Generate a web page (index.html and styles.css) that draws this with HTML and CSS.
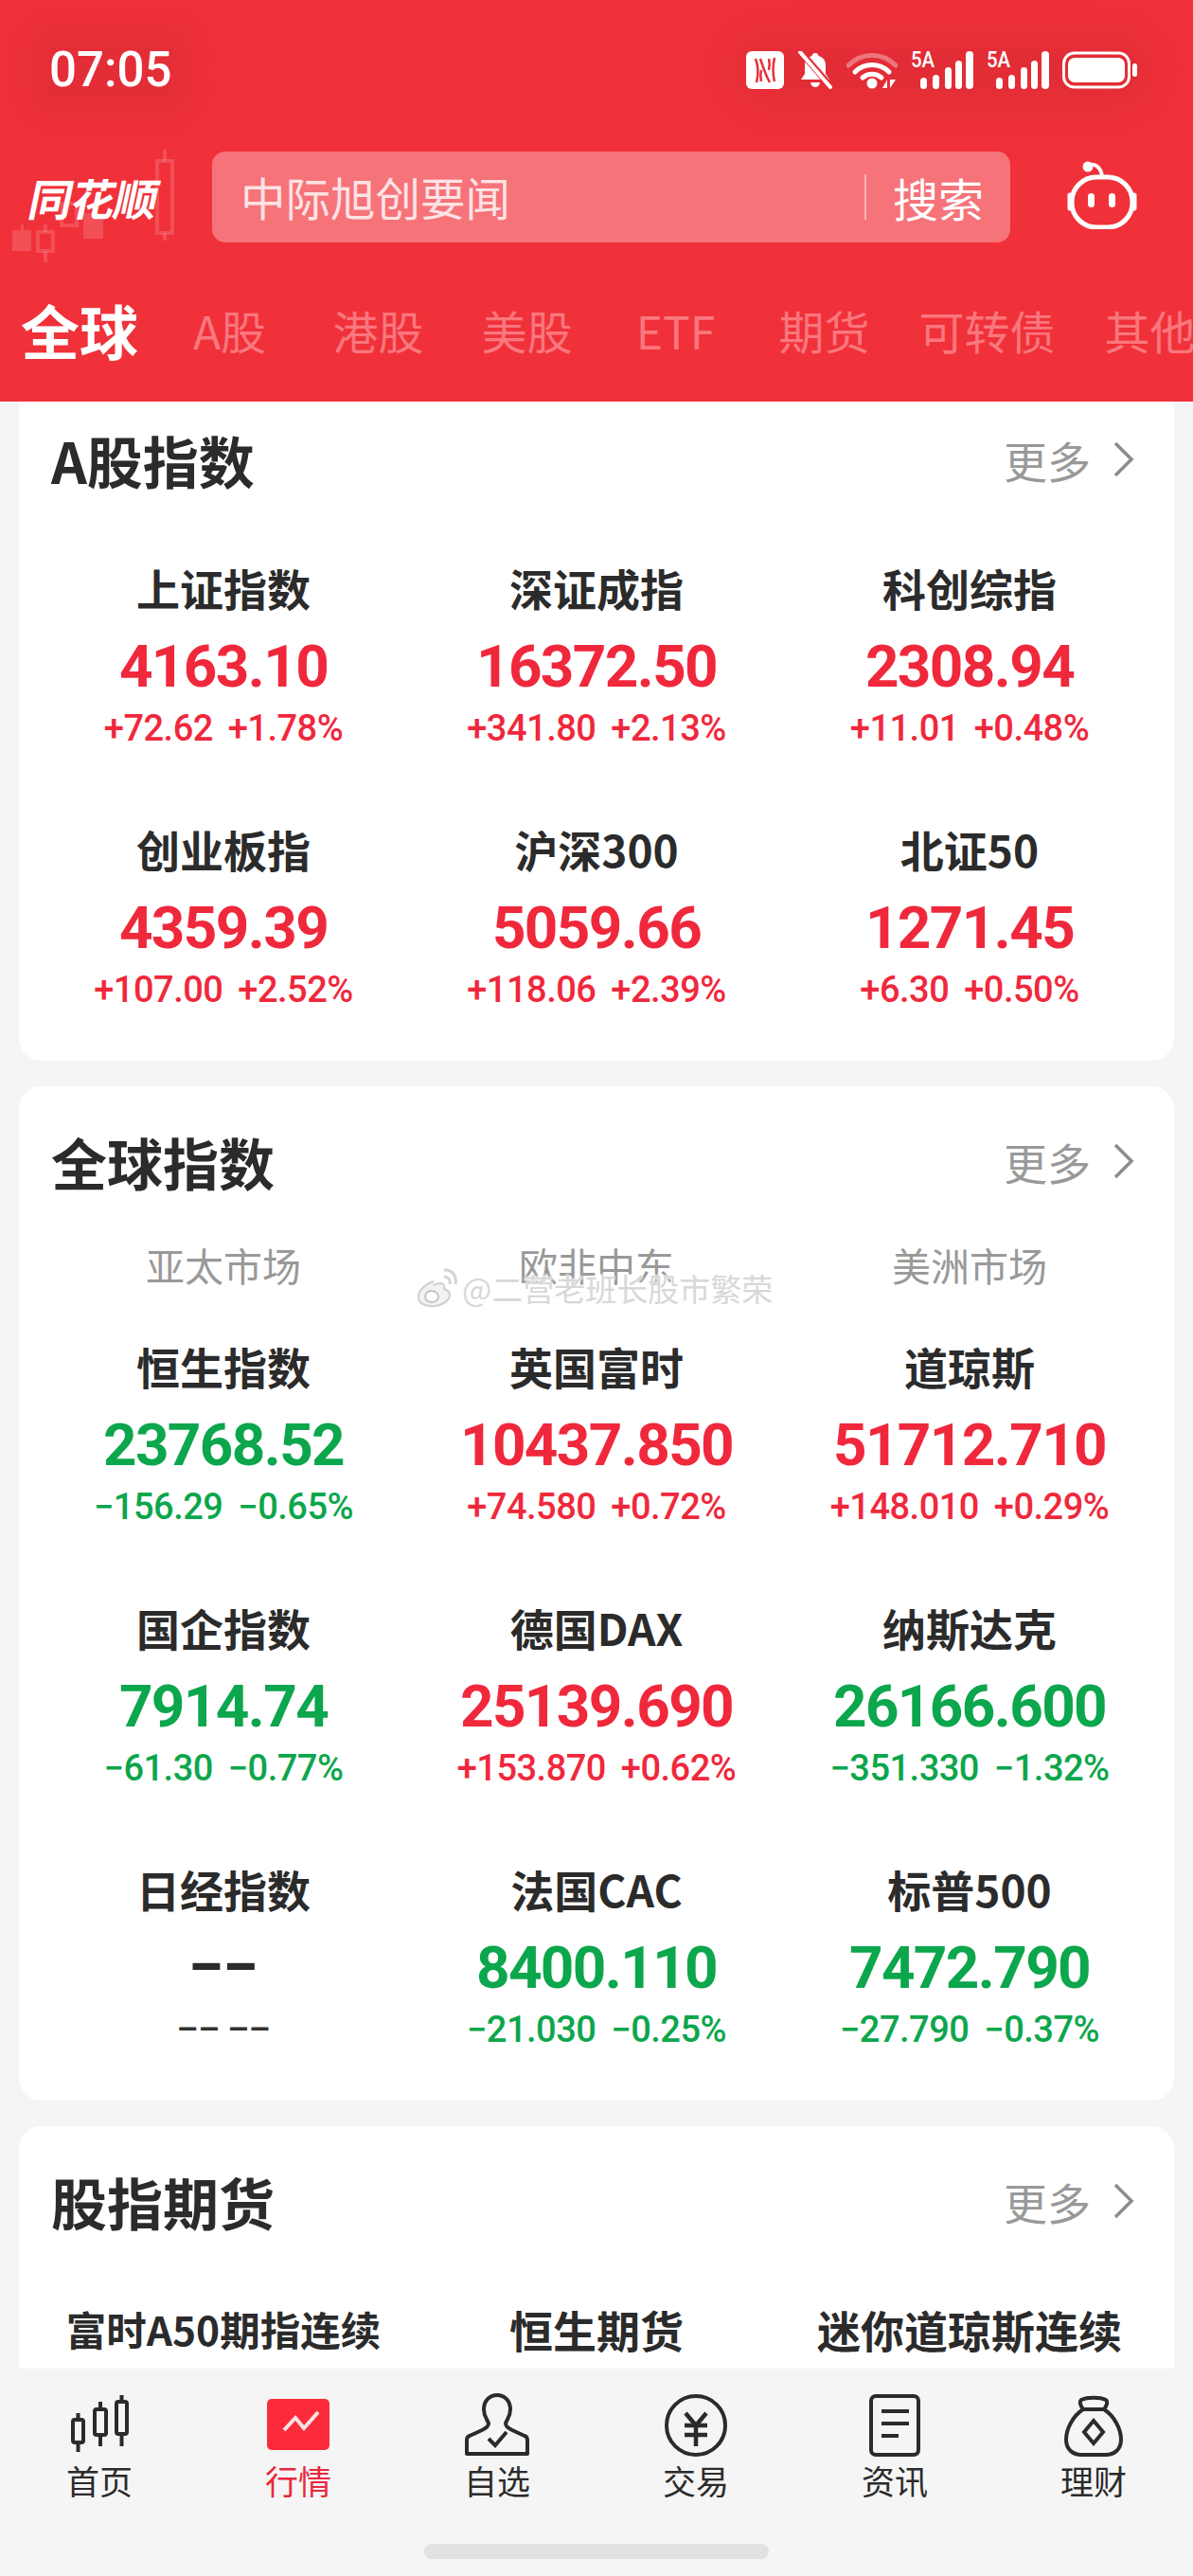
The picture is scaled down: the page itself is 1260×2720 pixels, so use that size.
FILE: index.html
```html
<!DOCTYPE html>
<html lang="zh-CN">
<head>
    <meta charset="UTF-8">
    <meta name="viewport" content="width=device-width, initial-scale=1.0">
    <title>行情</title>
    <link rel="stylesheet" href="styles.css">
</head>
<body>
    <div class="phone">
        <header class="header">
            <svg class="candles" viewBox="0 0 190 130" width="190" height="130">
                <g fill="#fff" fill-opacity="0.15">
                    <rect x="13" y="93" width="20" height="22"/><rect x="22" y="87" width="3" height="6"/>
                    <rect x="88" y="75" width="21" height="27"/>
                    <rect x="121" y="72" width="3" height="10"/>
                </g>
                <g fill="none" stroke="#fff" stroke-opacity="0.15" stroke-width="4">
                    <rect x="40" y="95" width="16" height="20"/><path d="M48 87v8M48 115v12"/>
                    <rect x="65" y="65" width="16" height="23"/>
                    <rect x="166" y="20" width="16" height="76"/><path d="M174 8v12M174 96v8"/>
                </g>
            </svg>
            <div class="status-bar">
                <span class="time">07:05</span>
                <div class="status-icons">
                    <svg class="ic-nfc" viewBox="0 0 40 40" width="40" height="40">
                        <rect width="40" height="40" rx="6" fill="#fff"/>
                        <path d="M10 8c3 8 3 17 1 25M15 8c3 9 5 16 10 25M30 7c-2 9-2 17 0 25M16 32c-1-5-1-8 0-12M24 8c1 4 1 8 0 12" fill="none" stroke="#e8303a" stroke-width="2.500"/>
                    </svg>
                    <svg class="ic-bell" viewBox="0 0 38 40" width="38" height="40">
                        <path d="M19 2c2 0 3 1 3.500 3c5 1.500 7.500 5 7.500 10v9l4 6H4l4-6v-9c0-5 3-8.500 7.500-10C16 3 17 2 19 2zM14 33h10c-.5 3-2.500 5-5 5s-4.500-2-5-5z" fill="#fff"/>
                        <path d="M3 0l33 38" stroke="#e8303a" stroke-width="7"/>
                        <path d="M3 1l32 37" stroke="#fff" stroke-width="4" stroke-linecap="round"/>
                    </svg>
                    <svg class="ic-wifi" viewBox="0 0 54 40" width="54" height="40">
                        <path d="M2 15C16 1 38 1 52 15" fill="none" stroke="#fff" stroke-opacity="0.35" stroke-width="5" stroke-linecap="round"/>
                        <path d="M9 22c10-10 26-10 36 0M17 28c6-5 14-5 20 0" fill="none" stroke="#fff" stroke-width="5" stroke-linecap="round"/>
                        <circle cx="27" cy="34" r="5.500" fill="#fff"/>
                        <path d="M38 39l5-9v9zM46 30v9l6-9z" fill="#fff"/>
                    </svg>
                    <div class="signal">
                        <span class="net">5A</span>
                        <svg viewBox="0 0 66 40" width="66" height="40">
                            <g fill="#fff">
                                <rect x="10" y="28" width="7" height="12" rx="3.500"/><rect x="23" y="25" width="7" height="15" rx="3.500"/>
                                <rect x="36" y="17" width="7" height="23" rx="3.500"/><rect x="58" y="0" width="8" height="40" rx="4"/>
                                <rect x="47" y="10" width="7" height="30" rx="3.500"/>
                            </g>
                        </svg>
                    </div>
                    <div class="signal">
                        <span class="net">5A</span>
                        <svg viewBox="0 0 66 40" width="66" height="40">
                            <g fill="#fff">
                                <rect x="10" y="28" width="7" height="12" rx="3.500"/><rect x="23" y="25" width="7" height="15" rx="3.500"/>
                                <rect x="36" y="17" width="7" height="23" rx="3.500"/><rect x="58" y="0" width="8" height="40" rx="4"/>
                                <rect x="47" y="10" width="7" height="30" rx="3.500"/>
                            </g>
                        </svg>
                    </div>
                    <svg class="ic-battery" viewBox="0 0 80 40" width="80" height="40">
                        <rect x="1.500" y="2" width="69" height="36" rx="11" fill="none" stroke="#fff" stroke-width="3"/>
                        <rect x="6" y="7" width="60" height="26" rx="7" fill="#fff"/>
                        <rect x="74" y="13" width="5" height="14" rx="2.500" fill="#fff"/>
                    </svg>
                </div>
            </div>
            <div class="search-row">
                <span class="logo">同花顺</span>
                <div class="search">
                    <span class="search-text">中际旭创要闻</span>
                    <span class="search-btn">搜索</span>
                </div>
                <svg class="robot" viewBox="0 0 80 72" width="80" height="72">
                    <path d="M25 5c6-3 14 0 15 12" fill="none" stroke="#fff" stroke-width="4"/>
                    <circle cx="25" cy="6" r="5.500" fill="#fff"/>
                    <rect x="8" y="17" width="64" height="53" rx="26" fill="none" stroke="#fff" stroke-width="5"/>
                    <path d="M6 36v14M74 36v14" stroke="#fff" stroke-width="5" stroke-linecap="round"/>
                    <rect x="25" y="34" width="7" height="15" rx="3.500" fill="#fff"/>
                    <rect x="47" y="34" width="7" height="15" rx="3.500" fill="#fff"/>
                </svg>
            </div>
            <nav class="tabs">
                <span class="tab active">全球</span>
                <span class="tab">A股</span>
                <span class="tab">港股</span>
                <span class="tab">美股</span>
                <span class="tab">ETF</span>
                <span class="tab">期货</span>
                <span class="tab wide">可转债</span>
                <span class="tab">其他</span>
            </nav>
        </header>

        <main class="content">
            <section class="card first">
                <div class="card-head">
                    <h2>A股指数</h2>
                    <a class="more">更多<svg viewBox="0 0 24 40" width="24" height="40"><path d="M4 3l17 17L4 37" fill="none" stroke="#8c8c8c" stroke-width="3.500"/></svg></a>
                </div>
                <div class="grid">
                    <div class="cell up"><div class="name">上证指数</div><div class="value">4163.10</div><div class="change">+72.62&nbsp; +1.78%</div></div>
                    <div class="cell up"><div class="name">深证成指</div><div class="value">16372.50</div><div class="change">+341.80&nbsp; +2.13%</div></div>
                    <div class="cell up"><div class="name">科创综指</div><div class="value">2308.94</div><div class="change">+11.01&nbsp; +0.48%</div></div>
                    <div class="cell up"><div class="name">创业板指</div><div class="value">4359.39</div><div class="change">+107.00&nbsp; +2.52%</div></div>
                    <div class="cell up"><div class="name">沪深300</div><div class="value">5059.66</div><div class="change">+118.06&nbsp; +2.39%</div></div>
                    <div class="cell up"><div class="name">北证50</div><div class="value">1271.45</div><div class="change">+6.30&nbsp; +0.50%</div></div>
                </div>
            </section>

            <section class="card">
                <div class="card-head">
                    <h2>全球指数</h2>
                    <a class="more">更多<svg viewBox="0 0 24 40" width="24" height="40"><path d="M4 3l17 17L4 37" fill="none" stroke="#8c8c8c" stroke-width="3.500"/></svg></a>
                </div>
                <div class="markets">
                    <span>亚太市场</span>
                    <span>欧非中东</span>
                    <span>美洲市场</span>
                </div>
                <div class="grid">
                    <div class="cell down"><div class="name">恒生指数</div><div class="value">23768.52</div><div class="change">−156.29&nbsp; −0.65%</div></div>
                    <div class="cell up"><div class="name">英国富时</div><div class="value">10437.850</div><div class="change">+74.580&nbsp; +0.72%</div></div>
                    <div class="cell up"><div class="name">道琼斯</div><div class="value">51712.710</div><div class="change">+148.010&nbsp; +0.29%</div></div>
                    <div class="cell down"><div class="name">国企指数</div><div class="value">7914.74</div><div class="change">−61.30&nbsp; −0.77%</div></div>
                    <div class="cell up"><div class="name">德国DAX</div><div class="value">25139.690</div><div class="change">+153.870&nbsp; +0.62%</div></div>
                    <div class="cell down"><div class="name">纳斯达克</div><div class="value">26166.600</div><div class="change">−351.330&nbsp; −1.32%</div></div>
                    <div class="cell empty"><div class="name">日经指数</div><div class="value">––</div><div class="change">–– ––</div></div>
                    <div class="cell down"><div class="name">法国CAC</div><div class="value">8400.110</div><div class="change">−21.030&nbsp; −0.25%</div></div>
                    <div class="cell down"><div class="name">标普500</div><div class="value">7472.790</div><div class="change">−27.790&nbsp; −0.37%</div></div>
                </div>
                <div class="watermark">
                    <svg viewBox="0 0 44 44" width="44" height="44">
                        <path d="M18 15C8 18 1 26 2 33c1 6 9 9 17 8c9-1 16-6 16-12c0-4-4-5-6-6c1-3 0-6-4-6c-2 0-5 1-7 2" fill="#f2f2f2" stroke="#cfcfcf" stroke-width="2"/>
                        <ellipse cx="16" cy="31" rx="7" ry="6" fill="#fff" stroke="#c4c4c4" stroke-width="2"/>
                        <path d="M29 10c4 0 7 3 6 8M29 3c8-1 14 6 12 15" fill="none" stroke="#d4d4d4" stroke-width="3"/>
                    </svg>
                    <span>@二营老班长股市繁荣</span>
                </div>
            </section>

            <section class="card">
                <div class="card-head">
                    <h2>股指期货</h2>
                    <a class="more">更多<svg viewBox="0 0 24 40" width="24" height="40"><path d="M4 3l17 17L4 37" fill="none" stroke="#8c8c8c" stroke-width="3.500"/></svg></a>
                </div>
                <div class="grid">
                    <div class="cell"><div class="name small">富时A50期指连续</div></div>
                    <div class="cell"><div class="name">恒生期货</div></div>
                    <div class="cell"><div class="name">迷你道琼斯连续</div></div>
                </div>
            </section>
        </main>

        <footer class="tabbar">
            <div class="nav-items">
                <div class="nav-item">
                    <svg viewBox="0 0 80 70" width="80" height="70">
                        <g fill="none" stroke="#2b2b2b" stroke-width="4">
                            <rect x="12" y="29" width="11" height="24" rx="2"/><path d="M17.500 22v7M17.500 53v10"/>
                            <rect x="35" y="18" width="12" height="27" rx="2"/><path d="M41 10v8M41 45v12"/>
                            <rect x="58" y="10" width="11" height="34" rx="2"/><path d="M63.500 3v7M63.500 44v13"/>
                        </g>
                    </svg>
                    <span>首页</span>
                </div>
                <div class="nav-item current">
                    <svg viewBox="0 0 80 70" width="80" height="70">
                        <rect x="7" y="7" width="66" height="54" rx="5" fill="#fb2b3b"/>
                        <path d="M25 40l12-13l9 11l15-17" fill="none" stroke="#fbe3e3" stroke-width="4"/>
                    </svg>
                    <span>行情</span>
                </div>
                <div class="nav-item">
                    <svg viewBox="0 0 80 70" width="80" height="70">
                        <path d="M40 3c8 0 14 6 14 15c0 8-4 11-5 15c0 3 3 5 7 7l13 6c3 1 3 3 3 6v13H8V52c0-3 0-5 3-6l13-6c4-2 7-4 7-7c-1-4-5-7-5-15C26 9 32 3 40 3z" fill="none" stroke="#2b2b2b" stroke-width="4" stroke-linejoin="round"/>
                        <path d="M31 49l7 7l12-14" fill="none" stroke="#2b2b2b" stroke-width="4"/>
                    </svg>
                    <span>自选</span>
                </div>
                <div class="nav-item">
                    <svg viewBox="0 0 80 70" width="80" height="70">
                        <circle cx="40" cy="35" r="31" fill="none" stroke="#2b2b2b" stroke-width="4"/>
                        <path d="M29 22l11 13l11-13M28 35h24M28 45h24M40 35v22" fill="none" stroke="#2b2b2b" stroke-width="4.500"/>
                    </svg>
                    <span>交易</span>
                </div>
                <div class="nav-item">
                    <svg viewBox="0 0 80 70" width="80" height="70">
                        <rect x="15" y="4" width="50" height="62" rx="5" fill="none" stroke="#2b2b2b" stroke-width="4"/>
                        <path d="M26 20h29M26 33h29M26 46h18" fill="none" stroke="#2b2b2b" stroke-width="4"/>
                    </svg>
                    <span>资讯</span>
                </div>
                <div class="nav-item">
                    <svg viewBox="0 0 80 70" width="80" height="70">
                        <path d="M29 18c-3-4-4-8-2-10c6-3 20-3 26 0c2 2 1 6-2 10z" fill="none" stroke="#2b2b2b" stroke-width="4" stroke-linejoin="round"/>
                        <path d="M29 18C18 25 11 39 11 50c0 11 8 16 16 16h26c8 0 16-5 16-16c0-11-7-25-18-32z" fill="none" stroke="#2b2b2b" stroke-width="4"/>
                        <path d="M40 30l10 12l-10 12l-10-12z" fill="none" stroke="#2b2b2b" stroke-width="4"/>
                    </svg>
                    <span>理财</span>
                </div>
            </div>
            <div class="home-bar"></div>
        </footer>
    </div>
</body>
</html>
```

FILE: styles.css
```css
* {
    box-sizing: border-box;
}
body {
    margin: 0;
    padding: 0;
    background-color: #f5f5f5;
    font-family: "Noto Sans CJK SC", "Noto Sans", sans-serif;
    color: #2b2b2b;
}
.phone {
    width: 1260px;
    height: 2720px;
    display: flex;
    flex-direction: column;
    overflow: hidden;
    position: relative;
}

/* header */
.header {
    flex: 0 0 424px;
    background-color: #f0313a;
    position: relative;
    overflow: hidden;
}
.candles {
    position: absolute;
    left: 0;
    top: 150px;
}
.status-bar {
    height: 146px;
    display: flex;
    align-items: center;
    justify-content: space-between;
    padding: 2px 58px 0 52px;
    position: relative;
}
.time {
    font-family: Roboto, sans-serif;
    font-size: 51px;
    font-weight: 500;
    line-height: 50px;
    color: #fff;
    background-color: rgba(200, 40, 50, 0.3);
    box-shadow: 0 0 36px 22px rgba(200, 40, 50, 0.3);
}
.status-icons {
    display: flex;
    align-items: center;
    gap: 14px;
    border-radius: 40px;
    box-shadow: 0 0 50px 20px rgba(200, 40, 50, 0.35);
    background-color: rgba(200, 40, 50, 0.35);
}
.signal {
    position: relative;
    width: 66px;
    height: 40px;
}
.net {
    position: absolute;
    left: 0;
    top: -4px;
    font-family: Roboto, sans-serif;
    font-size: 24px;
    font-weight: 500;
    color: #fff;
    line-height: 26px;
    transform: scaleX(0.85);
    transform-origin: left;
}
.search-row {
    margin-top: 14px;
    height: 96px;
    display: flex;
    align-items: center;
    position: relative;
}
.logo {
    flex: 0 0 224px;
    padding-left: 32px;
    font-size: 46px;
    font-weight: 700;
    color: #fff;
    letter-spacing: -1px;
    transform: skewX(-12deg);
}
.search {
    flex: 0 0 843px;
    height: 96px;
    background-color: #f6737a;
    border-radius: 14px;
    display: flex;
    align-items: center;
    justify-content: space-between;
    padding: 0 28px 0 30px;
}
.search-text {
    font-size: 47.5px;
    color: #fde3e4;
    line-height: 60px;
}
.search-btn {
    font-size: 48px;
    color: #fff;
    line-height: 48px;
    border-left: 2px solid #fab2b5;
    padding-left: 28px;
}
.robot {
    margin-left: 57px;
    margin-top: -4px;
}
.tabs {
    margin-top: 50px;
    display: flex;
    align-items: center;
    height: 84px;
    padding-left: 4px;
    white-space: nowrap;
}
.tab {
    flex: 0 0 157px;
    text-align: center;
    font-size: 48px;
    color: #f9777d;
}
.tab.wide {
    flex-basis: 187px;
}
.tab.active {
    flex-basis: 160px;
    font-size: 62px;
    font-weight: 700;
    color: #fff;
}

/* cards */
.content {
    flex: 1;
    min-height: 0;
    overflow: hidden;
    position: relative;
    z-index: 0;
}
.card {
    background-color: #fff;
    border-radius: 24px;
    margin: 0 20px 27px;
    padding: 0 19px 51px;
    position: relative;
}
.card.first {
    margin-top: -18px;
}
.card-head {
    height: 158px;
    display: flex;
    align-items: center;
    justify-content: space-between;
    padding: 0 23px 0 15px;
}
.card-head h2 {
    margin: 0;
    font-size: 59px;
    font-weight: 700;
    color: #2b2b2b;
}
.more {
    display: flex;
    align-items: center;
    gap: 22px;
    font-size: 46px;
    color: #999;
}
.markets {
    display: grid;
    grid-template-columns: repeat(3, 394px);
    height: 54px;
    line-height: 54px;
    margin-top: 3px;
    margin-bottom: 50px;
    text-align: center;
    font-size: 41px;
    color: #999;
}
.grid {
    margin-top: 26px;
    display: grid;
    grid-template-columns: repeat(3, 394px);
    row-gap: 73px;
}
.cell {
    text-align: center;
}
.name {
    height: 60px;
    line-height: 60px;
    font-size: 46px;
    font-weight: 700;
    color: #2b2b2b;
}
.name.small {
    font-size: 42.5px;
}
.value {
    height: 81px;
    margin-top: 13px;
    line-height: 81px;
    font-family: Roboto, sans-serif;
    font-size: 62px;
    font-weight: 700;
    letter-spacing: -1.6px;
}
.change {
    height: 48px;
    margin-top: 1px;
    line-height: 48px;
    font-family: Roboto, sans-serif;
    font-size: 38px;
    font-weight: 500;
    letter-spacing: -0.5px;
    word-spacing: -1px;
}
.up .value,
.up .change {
    color: #f0283c;
}
.down .value,
.down .change {
    color: #0ca64c;
}
.empty .value {
    font-size: 56px;
    font-weight: 900;
    letter-spacing: 2px;
    color: #2b2b2b;
}
.empty .change {
    font-size: 36px;
    word-spacing: 0;
    color: #333;
}

/* watermark over the market labels */
.watermark {
    position: absolute;
    left: 420px;
    top: 189px;
    display: flex;
    align-items: center;
    gap: 4px;
    font-size: 33px;
    color: #d8d8d8;
    text-shadow: 0 0 3px #fff, 0 0 3px #fff;
    white-space: nowrap;
}

/* bottom nav */
.tabbar {
    flex: 0 0 219px;
    background-color: #f5f5f5;
    position: relative;
}
.nav-items {
    display: grid;
    grid-template-columns: repeat(6, 210px);
    padding-top: 25px;
}
.nav-item {
    display: flex;
    flex-direction: column;
    align-items: center;
    font-size: 35px;
    line-height: 46px;
    color: #2b2b2b;
}
.nav-item svg {
    display: block;
}
.nav-item.current {
    color: #e8283c;
}
.home-bar {
    position: absolute;
    left: 448px;
    top: 185px;
    width: 364px;
    height: 16px;
    border-radius: 8px;
    background-color: #e2e2e2;
}
```
